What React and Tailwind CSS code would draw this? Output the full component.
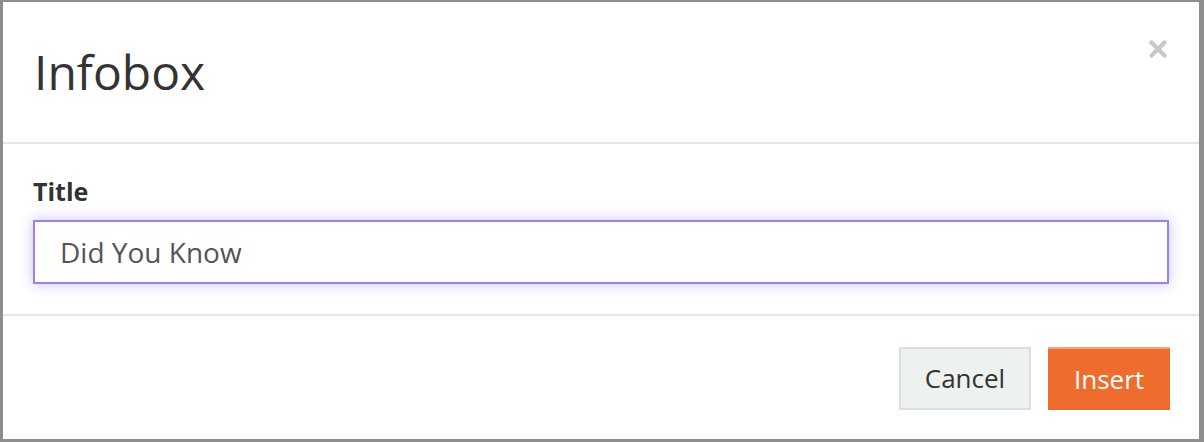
export default function App() {
  return (
    <div className="h-[442px] w-[1204px] overflow-hidden bg-[#8d8d8d] pt-[2px] pl-[3px] pr-[5px] pb-[3px] font-['Open_Sans',sans-serif]">
      <div className="flex h-[437px] flex-col bg-white">
        {/* Header */}
        <div className="relative flex h-[142px] items-center border-b-2 border-[#e6e6e6] px-[31px]">
          <h1 className="text-[48px] leading-none text-[#333]">Infobox</h1>
          <button className="absolute right-[32px] top-[38px] text-[#c8c8c8]">
            <svg width="18" height="18" viewBox="0 0 18 18">
              <path d="M2.5 2.5 L15.5 15.5 M15.5 2.5 L2.5 15.5" stroke="currentColor" strokeWidth="4.2" strokeLinecap="round" fill="none" />
            </svg>
          </button>
        </div>

        {/* Body */}
        <div className="h-[172px] border-b-2 border-[#e6e6e6] px-[30px] pt-[30px]">
          <label className="block text-[25px] font-bold leading-[34px] text-[#333]">Title</label>
          <input
            type="text"
            defaultValue="Did You Know"
            className="mt-[12px] h-[64px] w-[1136px] border-2 border-[#9d80ef] px-[25px] text-[28px] text-[#555] shadow-[0_0_12px_rgba(140,110,240,0.45)] outline-none"
          />
        </div>

        {/* Footer */}
        <div className="flex flex-1 items-start justify-end gap-[17px] px-[29px] pt-[31px]">
          <button className="h-[63px] w-[132px] border-2 border-[#dedede] bg-[#eef2ee] text-[26px] text-[#333]">Cancel</button>
          <button className="h-[63px] w-[122px] border-t-2 border-[#f4a37c] bg-[#ee6d2d] text-[26px] text-white shadow-[inset_0_0_0_2px_#ee6d2d]">Insert</button>
        </div>
      </div>
    </div>
  );
}
